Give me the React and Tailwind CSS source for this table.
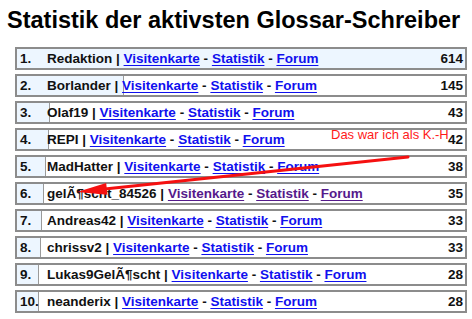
import React from "react";

const rows = [
  { rank: "1.", name: "Redaktion", count: 614, split: null },
  { rank: "2.", name: "Borlander", count: 145, split: 106 },
  { rank: "3.", name: "Olaf19", count: 43, split: 32 },
  { rank: "4.", name: "REPI", count: 42, split: 31 },
  { rank: "5.", name: "MadHatter", count: 38, split: 28 },
  { rank: "6.", name: "gelÃ¶scht_84526", count: 35, split: 26, visited: true },
  { rank: "7.", name: "Andreas42", count: 33, split: 24 },
  { rank: "8.", name: "chrissv2", count: 33, split: 23 },
  { rank: "9.", name: "Lukas9GelÃ¶scht", count: 28, split: 21 },
  { rank: "10.", name: "neanderix", count: 28, split: 21 },
];

const BLUE = "#edf6ff";

function rowBackground(split) {
  if (split == null) return { backgroundColor: BLUE };
  return {
    backgroundImage: `linear-gradient(to right, ${BLUE} ${split}px, #9a9a9a ${split}px, #9a9a9a ${split + 1}px, #ffffff ${split + 1}px)`,
  };
}

function Link({ children, visited }) {
  return (
    <a
      href="#"
      className={
        visited
          ? "text-[#551a8b] underline underline-offset-[2px]"
          : "text-[#1010ee] underline underline-offset-[2px]"
      }
    >
      {children}
    </a>
  );
}

function Row({ row }) {
  return (
    <div
      className="flex h-[23px] w-[452px] items-center border-2 border-[#8c8c8c] text-[13.5px] font-bold leading-[19px] text-[#111]"
      style={rowBackground(row.split)}
    >
      <div className="w-[30px] shrink-0 pl-[3px]">{row.rank}</div>
      <div className="flex-1 whitespace-nowrap">
        {row.name} |{" "}
        <Link visited={row.visited}>Visitenkarte</Link> -{" "}
        <Link visited={row.visited}>Statistik</Link> -{" "}
        <Link visited={row.visited}>Forum</Link>
      </div>
      <div className="pr-[2px] text-right">{row.count}</div>
    </div>
  );
}

export default function App() {
  return (
    <div
      className="relative h-[319px] w-[472px] overflow-hidden bg-white"
      style={{ fontFamily: '"Liberation Sans", Arial, sans-serif' }}
    >
      <h1 className="ml-[7px] mt-[6px] whitespace-nowrap text-[23.5px] font-bold leading-[28px] text-black">
        Statistik der aktivsten Glossar-Schreiber
      </h1>
      <div className="ml-[15px] mt-[13px] flex flex-col gap-[4px]">
        {rows.map((r) => (
          <Row key={r.rank} row={r} />
        ))}
      </div>

      {/* handwritten note and arrow pointing at row 6 */}
      <div className="absolute left-[331px] top-[127px] whitespace-nowrap text-[13px] leading-[15px] text-[#ff1a1a]">
        Das war ich als K.-H
      </div>
      <svg
        className="pointer-events-none absolute left-0 top-0"
        width="472"
        height="319"
        viewBox="0 0 472 319"
      >
        <line x1="408" y1="157" x2="100" y2="189.5" stroke="#f51010" strokeWidth="3" strokeLinecap="round" />
        <polygon points="77,192 107.4,194.8 106.2,182.9" fill="#f51010" />
      </svg>
    </div>
  );
}
